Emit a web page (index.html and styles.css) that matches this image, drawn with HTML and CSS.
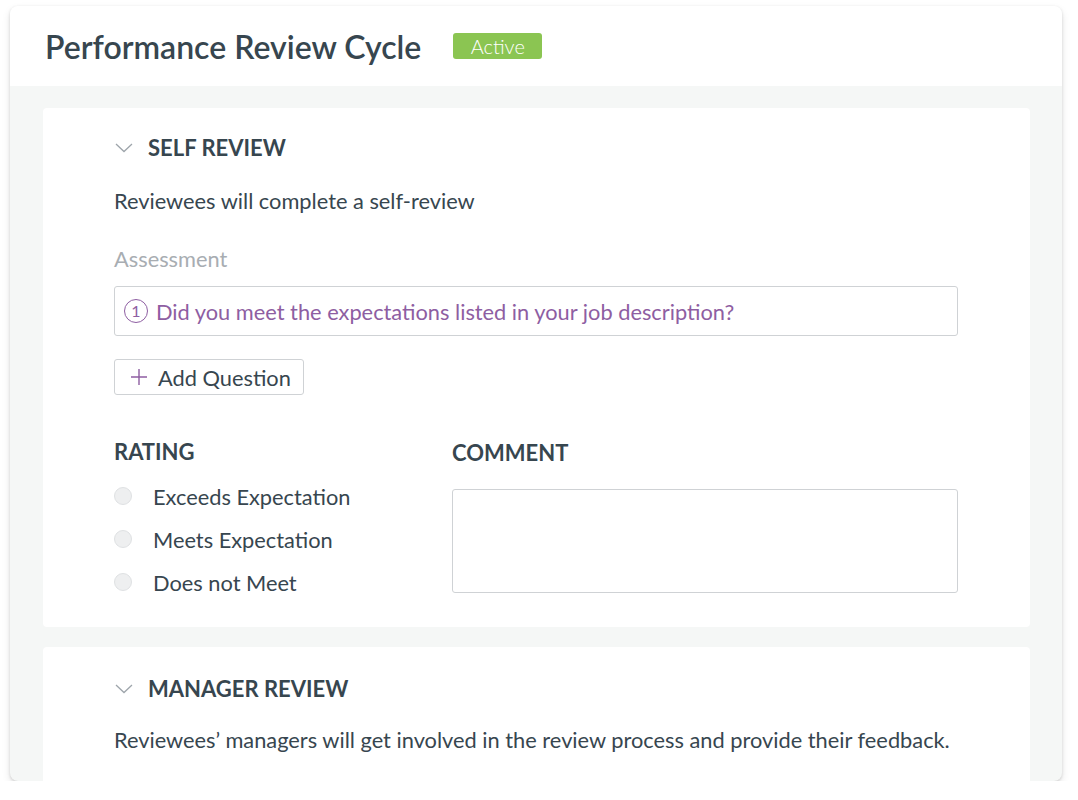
FILE: index.html
```html
<!DOCTYPE html>
<html lang="en">
<head>
    <meta charset="UTF-8">
    <meta name="viewport" content="width=device-width, initial-scale=1.0">
    <title>Performance Review Cycle</title>
    <link rel="stylesheet" href="styles.css">
</head>
<body>
    <div class="review-card">
        <div class="review-header">
            <h1>Performance Review Cycle</h1>
            <span class="badge">Active</span>
        </div>

        <div class="review-body">
            <section class="section">
                <div class="section-title">
                    <svg class="chevron" width="18" height="10" viewBox="0 0 18 10">
                        <path d="M1 1 L9 8.5 L17 1" fill="none" stroke="#9ea5ab" stroke-width="1.3"/>
                    </svg>
                    <h2>SELF REVIEW</h2>
                </div>
                <p class="section-desc">Reviewees will complete a self-review</p>

                <div class="field-label">Assessment</div>
                <div class="question-input">
                    <span class="question-num">1</span>
                    <span>Did you meet the expectations listed in your job description?</span>
                </div>

                <button class="add-btn">
                    <svg width="18" height="18" viewBox="0 0 18 18">
                        <path d="M9 1 V17 M1 9 H17" stroke="#8e5ea2" stroke-width="1.4"/>
                    </svg>
                    Add Question
                </button>

                <div class="answer-row">
                    <div class="rating">
                        <h3>RATING</h3>
                        <label class="radio"><span class="dot"></span>Exceeds Expectation</label>
                        <label class="radio"><span class="dot"></span>Meets Expectation</label>
                        <label class="radio"><span class="dot"></span>Does not Meet</label>
                    </div>
                    <div class="comment">
                        <h3>COMMENT</h3>
                        <div class="comment-box"></div>
                    </div>
                </div>
            </section>

            <section class="section section-last">
                <div class="section-title">
                    <svg class="chevron" width="18" height="10" viewBox="0 0 18 10">
                        <path d="M1 1 L9 8.5 L17 1" fill="none" stroke="#9ea5ab" stroke-width="1.3"/>
                    </svg>
                    <h2>MANAGER REVIEW</h2>
                </div>
                <p class="section-desc">Reviewees’ managers will get involved in the review process and provide their feedback.</p>
            </section>
        </div>
    </div>
</body>
</html>
```

FILE: styles.css
```css
body {
    font-family: Lato, 'Open Sans', sans-serif;
    margin: 0;
    padding: 6px 16px 0 10px;
    background-color: #ffffff;
    color: #37464f;
}

.review-card {
    width: 1052px;
    height: 775px;
    border-radius: 8px;
    overflow: hidden;
    background-color: #f5f7f6;
    box-shadow: 0 1px 3px rgba(0, 0, 0, 0.14), 0 4px 9px rgba(0, 0, 0, 0.1);
}

.review-header {
    display: flex;
    align-items: center;
    height: 80px;
    padding-left: 35px;
    background-color: #ffffff;
}

.review-header h1 {
    margin: 0;
    font-size: 32px;
    font-weight: 600;
    color: #37464f;
}

.badge {
    margin-left: 32px;
    width: 89px;
    height: 26px;
    line-height: 26px;
    text-align: center;
    background-color: #8bc552;
    color: white;
    font-size: 20px;
    font-weight: 300;
    border-radius: 3px;
}

.review-body {
    padding: 22px 32px 0 33px;
    display: flex;
    flex-direction: column;
    gap: 20px;
}

.section {
    background-color: #ffffff;
    border-radius: 4px;
    padding: 26px 71px 32px 71px;
}

.section-last {
    padding-top: 28px;
    padding-bottom: 60px;
}

.section-title {
    display: flex;
    align-items: center;
    gap: 15px;
    height: 26px;
}

.chevron {
    margin-left: 1px;
    margin-top: 2px;
}

.section-title h2 {
    margin: 0;
    font-size: 22px;
    font-weight: 700;
    color: #37464f;
}

.section-desc {
    margin: 28px 0 0 0;
    font-size: 21.8px;
    line-height: 26px;
}

.section-last .section-desc {
    margin-top: 26px;
}

.field-label {
    margin-top: 32px;
    font-size: 21.8px;
    line-height: 26px;
    color: #a8adb2;
}

.question-input {
    margin-top: 14px;
    width: 844px;
    height: 50px;
    box-sizing: border-box;
    border: 1px solid #cfd2d5;
    border-radius: 3px;
    display: flex;
    align-items: center;
    gap: 8px;
    padding-left: 9px;
    font-size: 21.8px;
    color: #8e5ea2;
}

.question-num {
    width: 22px;
    height: 22px;
    border: 1.5px solid #8e5ea2;
    border-radius: 50%;
    font-size: 16px;
    line-height: 22px;
    text-align: center;
}

.add-btn {
    margin-top: 23px;
    display: flex;
    align-items: center;
    gap: 10px;
    height: 36px;
    width: 190px;
    padding: 0 0 0 15px;
    background-color: #ffffff;
    border: 1px solid #cfd2d5;
    border-radius: 3px;
    font-family: inherit;
    font-size: 21.8px;
    color: #37464f;
    cursor: pointer;
}

.answer-row {
    display: flex;
    margin-top: 44px;
}

.rating {
    width: 338px;
}

.comment {
    width: 506px;
}

.answer-row h3 {
    margin: 0;
    font-size: 22px;
    font-weight: 700;
    line-height: 26px;
    color: #37464f;
}

.comment h3 {
    margin-top: 1px;
}

.radio {
    display: flex;
    align-items: center;
    gap: 21px;
    font-size: 21.8px;
    height: 26px;
    margin-top: 17px;
}

.rating h3 + .radio {
    margin-top: 18px;
}

.dot {
    width: 18px;
    height: 18px;
    box-sizing: border-box;
    border-radius: 50%;
    border: 1px solid #dfe1e3;
    background-color: #eeeff0;
}

.comment-box {
    margin-top: 23px;
    height: 104px;
    box-sizing: border-box;
    border: 1px solid #cfd2d5;
    border-radius: 3px;
}
```
